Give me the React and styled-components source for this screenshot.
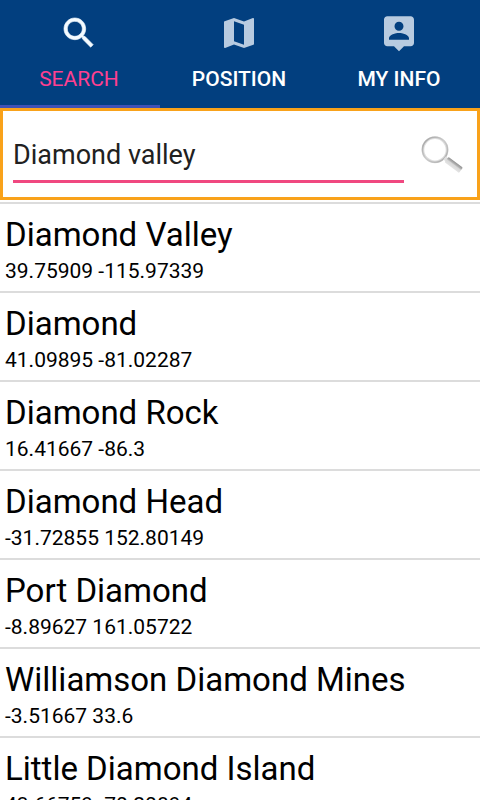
import React, { useState } from 'react';
import styled, { createGlobalStyle } from 'styled-components';

const GlobalStyle = createGlobalStyle`
  * { box-sizing: border-box; }
  body { margin: 0; background: #fff; font-family: Roboto, "Liberation Sans", sans-serif; }
`;

const Screen = styled.div`
  display: flex;
  flex-direction: column;
  height: 100vh;
  overflow: hidden;
`;

const TabBar = styled.nav`
  display: flex;
  flex: none;
  background: #023f7f;
`;

const Tab = styled.button`
  flex: 1;
  display: flex;
  flex-direction: column;
  align-items: center;
  gap: 12px;
  height: 108px;
  padding: 13px 2px 0 0;
  border: 0;
  border-bottom: 3px solid ${(p) => (p.$active ? '#3f51b5' : 'transparent')};
  background: none;
  color: ${(p) => (p.$active ? '#ff4090' : '#fff')};
  font: ${(p) => (p.$active ? 400 : 500)} 21px/28px Roboto, "Liberation Sans", sans-serif;
  cursor: pointer;
`;

const TabIcon = styled.svg`
  flex: none;
  width: 40px;
  height: 40px;
  fill: ${(p) => (p.$active ? '#f4fbff' : '#b8cbe0')};
  stroke: ${(p) => (p.$active ? '#f4fbff' : 'none')};
  stroke-width: 0.4;
`;

const SearchForm = styled.form`
  display: flex;
  flex: none;
  align-items: center;
  gap: 12px;
  height: 92px;
  padding: 0 11px 0 10px;
  border: 3px solid #f9a21a;
`;

const SearchInput = styled.input`
  flex: 1;
  min-width: 0;
  height: 58px;
  padding: 4px 0 0;
  border: 0;
  border-bottom: 3px solid #f04880;
  outline: 0;
  background: none;
  color: #212121;
  font: 400 27px/32px Roboto, "Liberation Sans", sans-serif;
`;

const SearchButton = styled.button`
  flex: none;
  padding: 0;
  border: 0;
  background: none;
  cursor: pointer;

  svg { display: block; width: 50px; height: 48px; }
`;

const Results = styled.ul`
  flex: 1;
  min-height: 0;
  margin: 2px 0 0;
  padding: 0;
  border-top: 2px solid #dcdcdc;
  list-style: none;
  overflow-y: auto;
  scrollbar-width: none;
`;

const Result = styled.li`
  height: 89px;
  padding: 10px 5px 0;
  border-bottom: 2px solid #dcdcdc;
  color: #000;
`;

const PlaceName = styled.div`
  font-size: 33px;
  line-height: 42px;
  white-space: nowrap;
`;

const Coordinates = styled.div`
  font-size: 21px;
  line-height: 30px;
`;

const tabs = [
  {
    id: 'search',
    label: 'SEARCH',
    path: 'M15.5 14h-.79l-.28-.27C15.41 12.59 16 11.11 16 9.5 16 5.91 13.09 3 9.5 3S3 5.91 3 9.5 5.91 16 9.5 16c1.61 0 3.09-.59 4.23-1.57l.27.28v.79l5 4.99L20.49 19l-4.99-5zm-6 0C7.01 14 5 11.99 5 9.5S7.01 5 9.5 5 14 7.01 14 9.5 11.99 14 9.5 14z',
  },
  {
    id: 'position',
    label: 'POSITION',
    path: 'M20.5 3l-.16.03L15 5.1 9 3 3.36 4.9c-.21.07-.36.25-.36.48V20.5c0 .28.22.5.5.5l.16-.03L9 18.9l6 2.1 5.64-1.9c.21-.07.36-.25.36-.48V3.5c0-.28-.22-.5-.5-.5zM15 19l-6-2.11V5l6 2.11V19z',
  },
  {
    id: 'info',
    label: 'MY INFO',
    path: 'M19 2H5c-1.11 0-2 .9-2 2v14c0 1.1.89 2 2 2h4l3 3 3-3h4c1.1 0 2-.9 2-2V4c0-1.1-.9-2-2-2zm-7 3.3c1.49 0 2.7 1.21 2.7 2.7s-1.21 2.7-2.7 2.7S9.3 9.49 9.3 8s1.21-2.7 2.7-2.7zM18 16H6v-.9c0-2 4-3.1 6-3.1s6 1.1 6 3.1v.9z',
  },
];

const places = [
  ['Diamond Valley', '39.75909 -115.97339'],
  ['Diamond', '41.09895 -81.02287'],
  ['Diamond Rock', '16.41667 -86.3'],
  ['Diamond Head', '-31.72855 152.80149'],
  ['Port Diamond', '-8.89627 161.05722'],
  ['Williamson Diamond Mines', '-3.51667 33.6'],
  ['Little Diamond Island', '43.66759 -70.20894'],
];

function MagnifierIcon() {
  return (
    <svg viewBox="0 0 50 48" aria-hidden="true">
      <defs>
        <linearGradient id="rim" x1="0" y1="0" x2="1" y2="1">
          <stop offset="0" stopColor="#a0a0a0" />
          <stop offset="0.5" stopColor="#cccccc" />
          <stop offset="1" stopColor="#a8a8a8" />
        </linearGradient>
        <linearGradient id="grip" x1="0" y1="0" x2="0" y2="1">
          <stop offset="0" stopColor="#929292" />
          <stop offset="0.3" stopColor="#b0b0b0" />
          <stop offset="0.5" stopColor="#d8d8d8" />
          <stop offset="1" stopColor="#e4e4e4" />
        </linearGradient>
      </defs>
      <circle cx="19" cy="19.7" r="12.1" fill="#fff" stroke="#dedede" strokeWidth="2.8" />
      <circle cx="19" cy="19.7" r="12.5" fill="none" stroke="url(#rim)" strokeWidth="1.5" />
      <g transform="translate(28.5 28) rotate(37)">
        <path d="M0-2h4v4H0z" fill="#e0e0e0" />
        <rect x="2.5" y="-3.3" width="18" height="6.6" rx="1" fill="url(#grip)" />
      </g>
    </svg>
  );
}

export default function App() {
  const [active, setActive] = useState('search');
  const [query, setQuery] = useState('Diamond valley');

  return (
    <Screen>
      <GlobalStyle />
      <TabBar>
        {tabs.map((tab) => (
          <Tab
            key={tab.id}
            type="button"
            $active={tab.id === active}
            aria-pressed={tab.id === active}
            onClick={() => setActive(tab.id)}
          >
            <TabIcon viewBox="0 0 24 24" $active={tab.id === active} aria-hidden="true">
              <path d={tab.path} />
            </TabIcon>
            {tab.label}
          </Tab>
        ))}
      </TabBar>
      <SearchForm role="search" onSubmit={(e) => e.preventDefault()}>
        <SearchInput
          type="text"
          aria-label="Place name"
          value={query}
          onChange={(e) => setQuery(e.target.value)}
        />
        <SearchButton type="submit" aria-label="Search">
          <MagnifierIcon />
        </SearchButton>
      </SearchForm>
      <Results>
        {places.map(([name, coordinates]) => (
          <Result key={name}>
            <PlaceName>{name}</PlaceName>
            <Coordinates>{coordinates}</Coordinates>
          </Result>
        ))}
      </Results>
    </Screen>
  );
}
